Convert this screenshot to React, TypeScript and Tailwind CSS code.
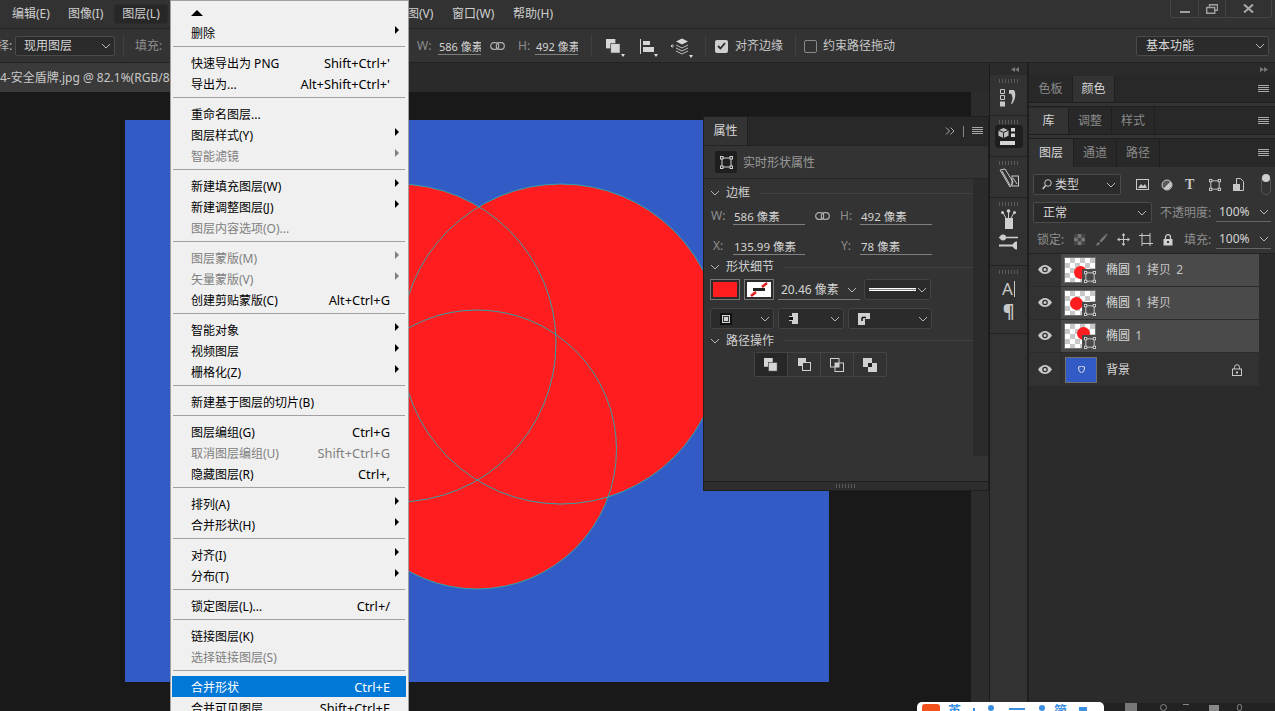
import React from "react";

const menu: any[] = [
  { t: "▲", top: true },
  { t: "删除", a: 1 },
  "-",
  { t: "快速导出为 PNG", s: "Shift+Ctrl+'" },
  { t: "导出为...", s: "Alt+Shift+Ctrl+'" },
  "-",
  { t: "重命名图层..." },
  { t: "图层样式(Y)", a: 1 },
  { t: "智能滤镜", a: 1, d: 1 },
  "-",
  { t: "新建填充图层(W)", a: 1 },
  { t: "新建调整图层(J)", a: 1 },
  { t: "图层内容选项(O)...", d: 1 },
  "-",
  { t: "图层蒙版(M)", a: 1, d: 1 },
  { t: "矢量蒙版(V)", a: 1, d: 1 },
  { t: "创建剪贴蒙版(C)", s: "Alt+Ctrl+G" },
  "-",
  { t: "智能对象", a: 1 },
  { t: "视频图层", a: 1 },
  { t: "栅格化(Z)", a: 1 },
  "-",
  { t: "新建基于图层的切片(B)" },
  "-",
  { t: "图层编组(G)", s: "Ctrl+G" },
  { t: "取消图层编组(U)", s: "Shift+Ctrl+G", d: 1 },
  { t: "隐藏图层(R)", s: "Ctrl+," },
  "-",
  { t: "排列(A)", a: 1 },
  { t: "合并形状(H)", a: 1 },
  "-",
  { t: "对齐(I)", a: 1 },
  { t: "分布(T)", a: 1 },
  "-",
  { t: "锁定图层(L)...", s: "Ctrl+/" },
  "-",
  { t: "链接图层(K)" },
  { t: "选择链接图层(S)", d: 1 },
  "-",
  { t: "合并形状", s: "Ctrl+E", h: 1 },
  { t: "合并可见图层", s: "Shift+Ctrl+E" },
];

const Chev = ({ c = "#b8b8b8" }: { c?: string }) => (
  <svg width="10" height="6" viewBox="0 0 10 6" className="shrink-0">
    <path d="M1 1l4 4 4-4" fill="none" stroke={c} strokeWidth="1" />
  </svg>
);

const Burger = () => (
  <svg width="11" height="8" viewBox="0 0 11 8">
    <path d="M0 .5h11M0 2.500h11M0 4.500h11M0 6.500h11" stroke="#a8a8a8" strokeWidth="1" />
  </svg>
);

const Caret = () => <span className="absolute right-[-4px] bottom-[-3px] border-x-[2.5px] border-t-[3px] border-x-transparent border-t-[#e0e0e0]" />;

const Link = () => (
  <svg width="15" height="8" viewBox="0 0 15 8">
    <rect x=".7" y=".7" width="8" height="6.6" rx="3.3" fill="none" stroke="#b0b0b0" strokeWidth="1.2" />
    <rect x="6.3" y=".7" width="8" height="6.6" rx="3.3" fill="none" stroke="#b0b0b0" strokeWidth="1.2" />
  </svg>
);

const ShapeBox = ({ s = 13, c = "#cfcfcf" }: { s?: number; c?: string }) => (
  <svg width={s} height={s} viewBox="0 0 13 13">
    <rect x="2" y="2" width="9" height="9" fill="none" stroke={c} />
    <g fill="#222" stroke={c} strokeWidth="1">
      <rect x=".5" y=".5" width="2.5" height="2.5" />
      <rect x="10" y=".5" width="2.5" height="2.5" />
      <rect x=".5" y="10" width="2.5" height="2.5" />
      <rect x="10" y="10" width="2.5" height="2.5" />
    </g>
  </svg>
);

const Eye = () => (
  <svg width="14" height="9" viewBox="0 0 14 9">
    <path d="M0 4.500C2 1.500 4.500 0 7 0s5 1.500 7 4.500C12 7.500 9.500 9 7 9S2 7.500 0 4.500z" fill="#c8c8c8" />
    <circle cx="7" cy="4.500" r="2.800" fill="#2f2f2f" />
    <circle cx="7" cy="4.500" r="1.500" fill="#c8c8c8" />
  </svg>
);

const Lock = ({ c = "#c8c8c8" }: { c?: string }) => (
  <svg width="10" height="12" viewBox="0 0 10 12">
    <path d="M2.500 5V3.200a2.500 2.500 0 0 1 5 0V5" fill="none" stroke={c} strokeWidth="1.200" />
    <rect x=".5" y="5" width="9" height="6.500" fill={c} />
    <rect x="4" y="7" width="2" height="2" fill="#333" />
  </svg>
);

const Grip = () => <div className="h-[4px] w-[20px] bg-[repeating-linear-gradient(90deg,#5a5a5a_0_1px,transparent_1px_3px)]" />;

const OpMerge = ({ f = "#d6d6d6", s = 16 }: { f?: string; s?: number }) => (
  <svg width={s} height={s} viewBox="0 0 16 16">
    <rect x="0" y="0" width="10" height="10" fill={f} />
    <rect x="5" y="5" width="10" height="10" fill={f} stroke="#333" strokeWidth=".7" />
  </svg>
);

const Field = ({ w, v }: { w: string; v: string }) => (
  <span className={"flex items-end overflow-hidden border-b border-[#808080] pb-[2px] leading-none text-[#d4d4d4] whitespace-nowrap " + w}>
    <span className="pl-[1px]">{v}</span>
  </span>
);

const layers = [
  { n: "椭圆", x: " 1 拷贝 2", pos: "left-[9px] top-[8px]" },
  { n: "椭圆", x: " 1 拷贝", pos: "left-[5px] top-[6px]" },
  { n: "椭圆", x: " 1", pos: "left-[12px] top-[3px]" },
];

export default function App() {
  return (
    <div className="relative flex h-[711px] w-[1275px] flex-col overflow-hidden bg-[#191919] text-[12px] text-[#d4d4d4] [font-family:'Noto_Sans','Noto_Sans_CJK_SC',sans-serif]">
      {/* menu bar */}
      <div className="flex h-[29px] shrink-0 items-center border-b border-[#222] bg-[#323232] text-[12px] text-[#cfcfcf]">
        <span className="w-[68px] pl-[12px]">编辑(E)</span>
        <span className="w-[46px]">图像(I)</span>
        <span className="flex h-[20px] w-[54px] items-center justify-center rounded-[3px] border border-[#2b2b2b] bg-[#272727]">图层(L)</span>
        <span className="ml-[227px] w-[57px] whitespace-nowrap">视图(V)</span>
        <span className="w-[61px]">窗口(W)</span>
        <span>帮助(H)</span>
        <div className="ml-auto mr-[3px] flex h-[18px] w-[102px] self-start rounded-b-[3px] border-x border-b border-[#444]">
          <span className="flex w-[28px] items-center justify-center border-r border-[#444]">
            <span className="mt-[6px] h-[2px] w-[10px] bg-[#a0a0a0]" />
          </span>
          <span className="flex w-[27px] items-center justify-center border-r border-[#444]">
            <svg width="12" height="10" viewBox="0 0 12 10"><path d="M3.500 2.500V.7h8v5.600H9M.7 3.500h8v5.800h-8z" fill="none" stroke="#a0a0a0" strokeWidth="1.400" /></svg>
          </span>
          <span className="flex flex-1 items-center justify-center">
            <svg width="11" height="9" viewBox="0 0 11 9"><path d="M1 .5l9 8M10 .5l-9 8" stroke="#a8a8a8" strokeWidth="2" /></svg>
          </span>
        </div>
      </div>

      {/* options bar */}
      <div className="flex h-[34px] shrink-0 items-center border-b border-[#222] bg-[#333] pt-[1px] text-[12px]">
        <span className="-ml-[3px] w-[18px] text-[#b8b8b8]">择:</span>
        <span className="flex h-[20px] w-[100px] items-center justify-between rounded-[2px] border border-[#4a4a4a] bg-[#2b2b2b] pl-[8px] pr-[3px] text-[#d4d4d4]">现用图层<Chev /></span>
        <span className="ml-[8px] h-[22px] w-px bg-[#3f3f3f]" />
        <span className="ml-[11px] w-[282px] text-[#8e8e8e]">填充:</span>
        <span className="w-[21px] text-[#8e8e8e]">W:</span>
        <Field w="w-[43px] h-[17px] text-[11px]" v="586 像素" />
        <span className="ml-[9px] w-[28px]"><Link /></span>
        <span className="w-[17px] text-[#8e8e8e]">H:</span>
        <Field w="w-[43px] h-[17px] text-[11px]" v="492 像素" />
        <span className="ml-[13px] h-[22px] w-px bg-[#3f3f3f]" />
        <span className="relative ml-[14px]"><OpMerge s={15} /><Caret /></span>
        <span className="relative ml-[19px]">
          <svg width="14" height="15" viewBox="0 0 14 15"><path d="M.5 0v15" stroke="#d6d6d6" /><rect x="3" y="2" width="7" height="4" fill="#d6d6d6" /><rect x="3" y="8" width="11" height="5" fill="#d6d6d6" /></svg>
          <Caret />
        </span>
        <span className="relative ml-[16px]">
          <svg width="19" height="17" viewBox="0 0 19 17"><path d="M1 8h3M2.500 6.500L1 8l1.500 1.500" stroke="#d6d6d6" fill="none" /><path d="M12 .5l6 3-6 3-6-3z" fill="#d6d6d6" /><path d="M6 7l6 3 6-3M6 10l6 3 6-3M6 13l6 3 6-3" stroke="#bdbdbd" fill="none" /></svg>
          <Caret />
        </span>
        <span className="ml-[16px] h-[22px] w-px bg-[#3f3f3f]" />
        <span className="ml-[9px] flex h-[13px] w-[13px] items-center justify-center rounded-[2px] bg-[#cfcfcf]">
          <svg width="9" height="8" viewBox="0 0 9 8"><path d="M1 4l2.500 2.500L8 1" fill="none" stroke="#2b2b2b" strokeWidth="1.800" /></svg>
        </span>
        <span className="ml-[7px] w-[60px] text-[#c8c8c8]">对齐边缘</span>
        <span className="h-[22px] w-px bg-[#3f3f3f]" />
        <span className="ml-[8px] h-[13px] w-[13px] rounded-[2px] border border-[#8a8a8a]" />
        <span className="ml-[6px] text-[#c8c8c8]">约束路径拖动</span>
        <span className="ml-auto mr-[6px] flex h-[20px] w-[133px] items-center justify-between rounded-[2px] border border-[#4a4a4a] bg-[#2b2b2b] pl-[9px] pr-[3px] text-[#d8d8d8]">基本功能<Chev /></span>
      </div>

      {/* body */}
      <div className="flex min-h-0 flex-1">
        <div className="flex w-[990px] shrink-0 flex-col border-r border-[#1a1a1a]">
          <div className="flex h-[29px] shrink-0 bg-[#2a2a2a]">
            <div className="flex w-[240px] items-center overflow-hidden whitespace-nowrap bg-[#3a3a3a] text-[12px] text-[#c8c8c8]">4-安全盾牌.jpg @ 82.1%(RGB/8#)</div>
          </div>
          <div className="flex min-h-0 flex-1">
            <div className="min-w-0 flex-1 pl-[125px] pt-[28px]">
              <svg width="704" height="562" viewBox="0 0 704 562" className="block bg-[#325bc6]">
                <g fill="#ff1d1f">
                  <circle cx="272" cy="223" r="159" />
                  <circle cx="436" cy="224" r="160" />
                  <circle cx="352" cy="329.500" r="139.500" />
                </g>
                <g fill="none" stroke="#22b0b0" strokeWidth=".9">
                  <circle cx="272" cy="223" r="159" />
                  <circle cx="436" cy="224" r="160" />
                  <circle cx="352" cy="329.500" r="139.500" />
                </g>
              </svg>
            </div>
            <div className="w-[18px] shrink-0 bg-[#2c2c2c]" />
          </div>
        </div>

        {/* tool strip */}
        <div className="flex w-[38px] shrink-0 flex-col border-r border-[#1f1f1f] bg-[#323232]">
          <div className="flex h-[12px] shrink-0 items-center justify-end bg-[#2b2b2b] pr-[8px]">
            <svg width="8" height="5" viewBox="0 0 8 5"><path d="M4 0v5L0 2.500zM8 0v5L4 2.500z" fill="#777" /></svg>
          </div>
          <div className="flex h-[41px] shrink-0 flex-col items-center border-b border-[#222] pt-[4px]">
            <Grip />
            <svg className="mt-[6px]" width="18" height="18" viewBox="0 0 18 18"><path d="M.5.500h4v4h-4zM.5 6.500h4v4h-4z" fill="none" stroke="#c8c8c8" /><rect x="0" y="12.500" width="5" height="5" fill="#c8c8c8" /><path d="M9 1h5c2 3 2 9-2 14l-1-.5c2-4 2-7 0-10L9 5z" fill="#c8c8c8" /></svg>
          </div>
          <div className="flex h-[41px] shrink-0 flex-col items-center border-b border-[#222] pt-[4px]">
            <Grip />
            <div className="mt-[1px] flex h-[23px] w-[28px] items-center justify-center rounded-[4px] bg-[#1e1e1e]">
              <svg width="22" height="18" viewBox="0 0 22 18"><path d="M5.500 0l5 2.200v5.600L5.500 10 .5 7.800V2.200z" fill="#bdbdbd" /><path d="M.5 2.200l5 2.200 5-2.200M5.500 4.400V10" stroke="#1e1e1e" fill="none" /><rect x="13" y="0" width="4" height="3.500" fill="#d6d6d6" /><rect x="13" y="5.500" width="4" height="3.500" fill="#d6d6d6" /><rect x="2" y="13" width="15" height="4" fill="#d6d6d6" /></svg>
            </div>
          </div>
          <div className="flex h-[41px] shrink-0 flex-col items-center border-b border-[#222] pt-[4px]">
            <Grip />
            <svg className="mt-[3px]" width="20" height="20" viewBox="0 0 20 20"><path d="M1 2l5-1 8 13-3 5z" fill="none" stroke="#c8c8c8" /><path d="M3 3l8 14" stroke="#c8c8c8" /><rect x="13" y="8" width="6.500" height="10" fill="none" stroke="#c8c8c8" /><path d="M14 10l4 6" stroke="#c8c8c8" /></svg>
          </div>
          <div className="flex h-[68px] shrink-0 flex-col items-center border-b border-[#222] pt-[4px]">
            <Grip />
            <svg className="mt-[3px]" width="15" height="20" viewBox="0 0 15 20"><rect x="4" y="9" width="8" height="11" fill="#cfcfcf" /><path d="M7.500 9V1M5 9L1.500 3M10 9l3.500-6" stroke="#cfcfcf" /><circle cx="7.500" cy="2" r="1.800" fill="#cfcfcf" /><circle cx="1.500" cy="3.500" r="1.500" fill="#cfcfcf" /><circle cx="13.500" cy="3.500" r="1.500" fill="#cfcfcf" /></svg>
            <svg className="mt-[5px]" width="19" height="16" viewBox="0 0 19 16"><path d="M0 3.500h19" stroke="#cfcfcf" strokeWidth="1.500" /><circle cx="4" cy="3.500" r="3" fill="#cfcfcf" /><path d="M0 11.500h16" stroke="#cfcfcf" strokeWidth="2" /><path d="M13 11.500c2-4 4-4 5-4v8c-1 0-3 0-5-4z" fill="#cfcfcf" /></svg>
          </div>
          <div className="flex h-[68px] shrink-0 flex-col items-center border-b border-[#222] pt-[4px]">
            <Grip />
            <span className="mt-[4px] flex h-[21px] items-center text-[17px] leading-none text-[#c8c8c8]">A<span className="ml-[1px] h-[16px] w-px bg-[#c8c8c8]" /></span>
            <span className="mt-[3px] text-[18px] font-bold leading-none text-[#c8c8c8]">¶</span>
          </div>
        </div>

        {/* right panels */}
        <div className="flex min-w-0 flex-1 flex-col border-l border-[#1f1f1f] bg-[#2b2b2b] text-[12px]">
          <div className="flex h-[12px] shrink-0 items-center justify-end bg-[#2b2b2b] pr-[7px]">
            <svg width="8" height="5" viewBox="0 0 8 5"><path d="M0 0v5l4-2.500zM4 0v5l4-2.500z" fill="#777" /></svg>
          </div>
          <div className="flex h-[28px] shrink-0 items-stretch border-b border-[#1f1f1f] bg-[#282828] pt-[1px] text-[#8a8a8a]">
            <span className="flex w-[44px] items-center justify-center border-r border-[#1f1f1f]">色板</span>
            <span className="flex w-[42px] items-center justify-center border-r border-[#1f1f1f] bg-[#333] text-[#d8d8d8]">颜色</span>
            <span className="ml-auto flex items-center pr-[6px]"><Burger /></span>
          </div>
          <div className="h-[4px] shrink-0 border-b border-[#1f1f1f] bg-[#333]" />
          <div className="flex h-[28px] shrink-0 items-stretch border-b border-[#1f1f1f] bg-[#282828] pt-[1px] text-[#8a8a8a]">
            <span className="flex w-[39px] items-center justify-center bg-[#333] text-[#d8d8d8]">库</span>
            <span className="flex w-[44px] items-center justify-center border-x border-[#1f1f1f]">调整</span>
            <span className="flex w-[43px] items-center justify-center border-r border-[#1f1f1f]">样式</span>
            <span className="ml-auto flex items-center pr-[6px]"><Burger /></span>
          </div>
          <div className="h-[4px] shrink-0 border-b border-[#1f1f1f] bg-[#333]" />
          <div className="flex h-[28px] shrink-0 items-stretch bg-[#282828] text-[#8a8a8a]">
            <span className="flex w-[44px] items-center justify-center bg-[#333] text-[#d8d8d8]">图层</span>
            <span className="flex w-[44px] items-center justify-center border-x border-[#1f1f1f]">通道</span>
            <span className="flex w-[43px] items-center justify-center border-r border-[#1f1f1f]">路径</span>
            <span className="ml-auto flex items-center pr-[6px]"><Burger /></span>
          </div>

          <div className="flex h-[32px] shrink-0 items-center bg-[#333] pl-[4px] pt-[3px]">
            <span className="flex h-[21px] w-[88px] items-center rounded-[2px] border border-[#4a4a4a] bg-[#2b2b2b] pl-[8px] pr-[4px] text-[#d4d4d4]">
              <svg width="10" height="11" viewBox="0 0 10 11"><circle cx="6" cy="4" r="3.300" fill="none" stroke="#c8c8c8" /><path d="M3.500 6.500L.7 10" stroke="#c8c8c8" strokeWidth="1.500" /></svg>
              <span className="ml-[3px] flex-1">类型</span>
              <Chev />
            </span>
            <svg className="ml-[15px]" width="13" height="11" viewBox="0 0 13 11"><rect x=".5" y=".5" width="12" height="10" fill="none" stroke="#c8c8c8" /><path d="M2 9l3-4 2 2 2-2 2 4z" fill="#c8c8c8" /></svg>
            <svg className="ml-[12px]" width="12" height="12" viewBox="0 0 12 12"><circle cx="6" cy="6" r="5" fill="#5a5a5a" stroke="#c8c8c8" /><path d="M9.500 2.500a5 5 0 0 1-7 7z" fill="#c8c8c8" /></svg>
            <span className="ml-[12px] w-[11px] text-[14px] font-bold leading-none text-[#c8c8c8] [font-family:'Liberation_Serif',serif]">T</span>
            <span className="ml-[13px] flex"><ShapeBox s={12} /></span>
            <svg className="ml-[12px]" width="11" height="13" viewBox="0 0 11 13"><path d="M3.500 6V.5h4l3 3v9H7" fill="none" stroke="#c8c8c8" /><rect x="0" y="6" width="7" height="7" fill="#c8c8c8" /></svg>
            <span className="relative ml-[17px] h-[20px] w-[10px] rounded-full border border-[#555]"><span className="absolute left-[0px] top-[-2px] h-[8px] w-[8px] rounded-full bg-[#d0d0d0]" /></span>
          </div>

          <div className="flex h-[27px] shrink-0 items-center bg-[#333] pl-[4px]">
            <span className="flex h-[21px] w-[119px] items-center justify-between rounded-[2px] border border-[#4a4a4a] bg-[#2b2b2b] pl-[9px] pr-[4px] text-[#d8d8d8]">正常<Chev /></span>
            <span className="ml-[8px] w-[56px] whitespace-nowrap text-[#8e8e8e]">不透明度:</span>
            <span className="flex h-[18px] w-[55px] items-center justify-between border-b border-[#666] pl-[3px] pr-[2px] text-[12px] text-[#d4d4d4]">100%<Chev /></span>
          </div>

          <div className="flex h-[28px] shrink-0 items-center border-b border-[#232323] bg-[#333] pl-[8px]">
            <span className="w-[33px] whitespace-nowrap text-[#8e8e8e]">锁定:</span>
            <svg className="ml-[4px]" width="11" height="11" viewBox="0 0 11 11"><rect width="11" height="11" fill="#777" /><path d="M0 0h3.700v3.700H0zM7.300 0H11v3.700H7.300zM3.700 3.700h3.600v3.600H3.700zM0 7.300h3.700V11H0zM7.300 7.300H11V11H7.300z" fill="#444" /></svg>
            <svg className="ml-[10px]" width="13" height="13" viewBox="0 0 13 13"><path d="M12 .5C9 3 6 5.500 4.500 8L6 9.500C8.500 7.500 11 4 12.500 1z" fill="#777" /><path d="M3.500 9L5 10.500C4 12.500 2 12.500.5 12.500 2 11 2 10 3.500 9z" fill="#777" /></svg>
            <svg className="ml-[9px]" width="13" height="13" viewBox="0 0 13 13"><path d="M6.500 0L4.500 2.500h4zM6.500 13l-2-2.500h4zM0 6.500l2.500-2v4zM13 6.500l-2.500-2v4z" fill="#c8c8c8" /><path d="M6.500 2v9M2 6.500h9" stroke="#c8c8c8" /></svg>
            <svg className="ml-[9px]" width="14" height="13" viewBox="0 0 14 13"><path d="M3 2.500h8M3 10.500h8M3 0v13M11 0v13M0 2.500h3M11 10.500h3" stroke="#c8c8c8" fill="none" /></svg>
            <span className="ml-[10px] flex"><Lock c="#d0d0d0" /></span>
            <span className="ml-[11px] w-[28px] whitespace-nowrap text-[#8e8e8e]">填充:</span>
            <span className="ml-[4px] flex h-[18px] w-[55px] items-center justify-between border-b border-[#666] pl-[3px] pr-[2px] text-[12px] text-[#d4d4d4]">100%<Chev /></span>
          </div>

          <div className="w-[230px] shrink-0">
            {layers.map((l, i) => (
              <div key={i} className="flex h-[33px] items-stretch border-b border-[#2b2b2b]">
                <span className="flex w-[32px] items-center justify-center bg-[#323232] pb-[1px]"><Eye /></span>
                <div className="flex flex-1 items-center bg-[#4a4a4a] pl-[3px]">
                  <div className="relative h-[26px] w-[32px] border border-[#707070] bg-[repeating-conic-gradient(#c8c8c8_0_25%,#fff_0_50%)] bg-[length:10px_10px]">
                    <span className={"absolute h-[13px] w-[13px] rounded-full bg-[#ff1d1f] " + l.pos} />
                    <span className="absolute bottom-[-2px] right-[-2px] flex h-[15px] w-[15px] items-center justify-center bg-[#4a4a4a]"><ShapeBox s={12} c="#d0d0d0" /></span>
                  </div>
                  <span className="ml-[10px] whitespace-pre text-[#d8d8d8] [word-spacing:2px]">{l.n}<span className="text-[#c4c4c4]">{l.x}</span></span>
                </div>
              </div>
            ))}
            <div className="flex h-[33px] items-stretch bg-[#323232]">
              <span className="flex w-[32px] items-center justify-center pb-[1px]"><Eye /></span>
              <div className="flex flex-1 items-center border-l border-[#2b2b2b] pl-[3px]">
                <div className="flex h-[26px] w-[32px] items-center justify-center border border-[#707070] bg-[#325bc6]">
                  <svg width="7" height="7" viewBox="0 0 7 7"><path d="M.5 1l3-1 3 1c0 3-1 5-3 6-2-1-3-3-3-6z" fill="none" stroke="#e8e8e8" /></svg>
                </div>
                <span className="ml-[9px] flex-1 text-[#d8d8d8]">背景</span>
                <span className="mr-[17px] flex"><svg width="10" height="12" viewBox="0 0 10 12"><path d="M2.500 5V3.200a2.500 2.500 0 0 1 5 0V5" fill="none" stroke="#c8c8c8" /><rect x=".5" y="5" width="9" height="6.500" fill="none" stroke="#c8c8c8" /><rect x="4" y="7.500" width="2" height="2" fill="#c8c8c8" /></svg></span>
              </div>
            </div>
          </div>
        </div>
      </div>

      {/* properties panel (floating) */}
      <div className="absolute left-[703px] top-[116px] flex h-[375px] w-[286px] flex-col border border-[#1f1f1f] bg-[#333] text-[12px]">
        <div className="flex h-[29px] shrink-0 items-stretch border-b border-[#232323] bg-[#282828]">
          <span className="flex w-[44px] items-center justify-center border-r border-[#1f1f1f] bg-[#333] text-[#d8d8d8]">属性</span>
          <span className="ml-auto flex items-center pr-[5px]">
            <svg width="10" height="8" viewBox="0 0 10 8"><path d="M1 .5L4.500 4 1 7.500M5.500.5L9 4 5.500 7.500" fill="none" stroke="#b0b0b0" /></svg>
            <span className="mx-[8px] h-[11px] w-px bg-[#888]" />
            <Burger />
          </span>
        </div>
        <div className="flex h-[33px] shrink-0 items-center border-b border-[#262626] pl-[11px]">
          <span className="flex h-[22px] w-[22px] items-center justify-center rounded-[2px] bg-[#1e1e1e]"><ShapeBox s={13} c="#d0d0d0" /></span>
          <span className="ml-[6px] pt-[2px] text-[#9a9a9a]">实时形状属性</span>
        </div>
        <div className="flex min-h-0 flex-1">
          <div className="w-[269px] shrink-0">
            <div className="flex h-[26px] items-center pl-[6px] pt-[2px]">
              <Chev /><span className="ml-[6px] text-[#d0d0d0]">边框</span><span className="ml-[10px] h-px flex-1 bg-[#3f3f3f]" />
            </div>
            <div className="flex h-[20px] items-end">
              <span className="ml-[7px] w-[22px] text-[#8e8e8e]">W:</span>
              <Field w="w-[72px] h-[20px] text-[11.5px]" v="586 像素" />
              <span className="mb-[5px] ml-[10px] w-[25px]"><Link /></span>
              <span className="w-[20px] text-[#8e8e8e]">H:</span>
              <Field w="w-[72px] h-[20px] text-[11.5px]" v="492 像素" />
            </div>
            <div className="mt-[10px] flex h-[20px] items-end">
              <span className="ml-[9px] w-[20px] text-[#8e8e8e]">X:</span>
              <Field w="w-[72px] h-[20px] text-[11.5px]" v="135.99 像素" />
              <span className="ml-[36px] w-[19px] text-[#8e8e8e]">Y:</span>
              <Field w="w-[72px] h-[20px] text-[11.5px]" v="78 像素" />
            </div>
            <div className="flex h-[22px] items-center pl-[6px] pt-[2px]">
              <Chev /><span className="ml-[6px] text-[#d0d0d0]">形状细节</span><span className="ml-[10px] h-px flex-1 bg-[#3f3f3f]" />
            </div>
            <div className="mt-[2px] flex h-[21px] items-center pl-[6px]">
              <span className="flex h-[21px] w-[30px] items-center justify-center border border-[#777] bg-[#2b2b2b]"><span className="h-[15px] w-[24px] bg-[#ff1d1f]" /></span>
              <span className="ml-[4px] flex h-[21px] w-[30px] items-center justify-center border border-[#777] bg-[#2b2b2b]">
                <svg width="24" height="15" viewBox="0 0 24 15"><rect width="24" height="15" fill="#fff" /><path d="M15 5l5-4M4 14l5-4" stroke="#e01b1b" strokeWidth="2.500" /><rect x="6" y="6" width="12" height="3" fill="#222" /></svg>
              </span>
              <span className="ml-[4px] flex h-[21px] w-[82px] items-center justify-between border-b border-[#777] pl-[3px] pr-[3px] pt-[2px] text-[12px] text-[#d4d4d4]">20.46 像素<Chev /></span>
              <span className="ml-[4px] flex h-[21px] w-[67px] items-center justify-between rounded-[3px] border border-[#444] bg-[#2b2b2b] pl-[4px] pr-[3px]">
                <span className="h-[3px] w-[47px] border-y border-[#fff] bg-[#888]" /><Chev />
              </span>
            </div>
            <div className="mt-[8px] flex h-[21px] items-center gap-[4px] pl-[6px]">
              <span className="flex h-[21px] w-[64px] items-center justify-between rounded-[3px] border border-[#444] bg-[#2b2b2b] pl-[9px] pr-[3px]">
                <span className="flex h-[12px] w-[12px] items-center justify-center border-2 border-[#111] bg-[#d0d0d0]"><span className="h-[6px] w-[6px] border border-[#333]" /></span><Chev />
              </span>
              <span className="flex h-[21px] w-[66px] items-center justify-between rounded-[3px] border border-[#444] bg-[#2b2b2b] pl-[10px] pr-[3px]">
                <svg width="9" height="11" viewBox="0 0 9 11"><path d="M3 0h6v11H3V8H0V3h3z" fill="#d0d0d0" /><rect x="0" y="4" width="4" height="3" fill="#111" /></svg><Chev />
              </span>
              <span className="flex h-[21px] w-[84px] items-center justify-between rounded-[3px] border border-[#444] bg-[#2b2b2b] pl-[9px] pr-[3px]">
                <svg width="12" height="12" viewBox="0 0 12 12"><path d="M0 0h12v6H7v6H0z" fill="#d0d0d0" /><path d="M4 4.500h4M4 4.500V8" stroke="#111" strokeWidth="1.500" /></svg><Chev />
              </span>
            </div>
            <div className="flex h-[22px] items-center pl-[6px] pt-[1px]">
              <Chev /><span className="ml-[6px] text-[#d0d0d0]">路径操作</span><span className="ml-[10px] h-px flex-1 bg-[#3f3f3f]" />
            </div>
            <div className="ml-[50px] mt-[1px] flex h-[25px] w-[133px] rounded-[2px] border border-[#444]">
              <span className="flex w-[33px] items-center justify-center border-r border-[#444] bg-[#272727]"><OpMerge s={14} /></span>
              <span className="flex w-[33px] items-center justify-center border-r border-[#444]">
                <svg width="13" height="13" viewBox="0 0 13 13"><rect width="8" height="8" fill="#d0d0d0" /><rect x="4.500" y="4.500" width="8" height="8" fill="#333" stroke="#d0d0d0" /></svg>
              </span>
              <span className="flex w-[33px] items-center justify-center border-r border-[#444]">
                <svg width="14" height="14" viewBox="0 0 14 14"><rect x=".5" y=".5" width="8.500" height="8.500" fill="none" stroke="#d0d0d0" /><rect x="5" y="5" width="8.500" height="8.500" fill="none" stroke="#d0d0d0" /><rect x="5" y="5" width="4" height="4" fill="#d0d0d0" /></svg>
              </span>
              <span className="flex flex-1 items-center justify-center">
                <svg width="14" height="14" viewBox="0 0 14 14"><rect width="9" height="9" fill="#d0d0d0" /><rect x="5" y="5" width="9" height="9" fill="#d0d0d0" /><rect x="5" y="5" width="4" height="4" fill="#222" /></svg>
              </span>
            </div>
          </div>
          <div className="mb-[25px] w-[15px] bg-[#2b2b2b]" />
        </div>
        <div className="flex h-[9px] shrink-0 items-center justify-center border-t border-[#1f1f1f] bg-[#2e2e2e]"><Grip /></div>
      </div>

      {/* layer menu */}
      <div className="absolute left-[170px] top-0 h-[720px] w-[239px] overflow-hidden border border-[#a0a0a0] bg-[#f0f0f0] pl-[1px] pr-[2px] text-[12px] text-black">
        {menu.map((m, i) =>
          m === "-" ? (
            <div key={i} className="h-[9px] px-[1px] pt-[3px]"><div className="h-px bg-[#a0a0a0]" /></div>
          ) : (
            <div key={i} className={"relative flex h-[21px] items-center whitespace-nowrap pl-[19px] pr-[16px] pt-[2px] " + (m.h ? "bg-[#0078d7] text-white " : m.d ? "text-[#808080] " : "text-black ")}>
              {m.top ? <span className="h-0 w-0 border-x-[6px] border-b-[6px] border-x-transparent border-b-black" /> : <span>{m.t}</span>}
              {m.s && <span className="ml-auto text-[12.800px]">{m.s}</span>}
              {m.a && <span className={"absolute right-[7px] top-[4px] h-0 w-0 border-y-[4px] border-l-[4px] border-y-transparent " + (m.d ? "border-l-[#808080]" : "border-l-black")} />}
            </div>
          )
        )}
      </div>

      {/* bottom strip / IME bar */}
      <div className="absolute bottom-0 left-[1104px] right-0 flex h-[8px] items-start bg-[#222] pl-[21px]">
        <span className="h-[8px] w-[12px] bg-[#777]" />
        <span className="ml-[23px] mt-[1px] h-[7px] w-[7px] rounded-full border border-[#888]" />
        <span className="ml-[16px] mt-[1px] h-[1px] w-[6px] bg-[#888]" />
        <span className="ml-[20px] mt-[2px] h-[6px] w-[10px] bg-[#888]" />
        <span className="ml-[18px] mt-[1px] h-[7px] w-[5px] rounded-full border border-[#888]" />
      </div>
      <div className="absolute bottom-0 left-[917px] flex h-[9px] w-[187px] items-start overflow-hidden rounded-t-[5px] bg-white pl-[5px] pt-[2px] text-[13px] font-bold leading-[13px] text-[#3b8fe0]">
        <span className="h-[10px] w-[18px] rounded-t-[3px] bg-[#f4511e]" />
        <span className="ml-[8px]">英</span>
        <span className="ml-[12px] mt-[4px] h-[6px] w-[2px] bg-[#3b8fe0]" />
        <span className="ml-[13px] mt-[1px] h-[6px] w-[6px] rounded-full bg-[#3b8fe0]" />
        <span className="ml-[15px] mt-[4px] h-[2px] w-[16px] bg-[#3b8fe0]" />
        <span className="ml-[14px] mt-[1px] h-[6px] w-[6px] rounded-full bg-[#3b8fe0]" />
        <span className="ml-[9px]">简</span>
        <span className="ml-[12px] mt-[3px] h-[6px] w-[8px] bg-[#3b8fe0]" />
      </div>
    </div>
  );
}
